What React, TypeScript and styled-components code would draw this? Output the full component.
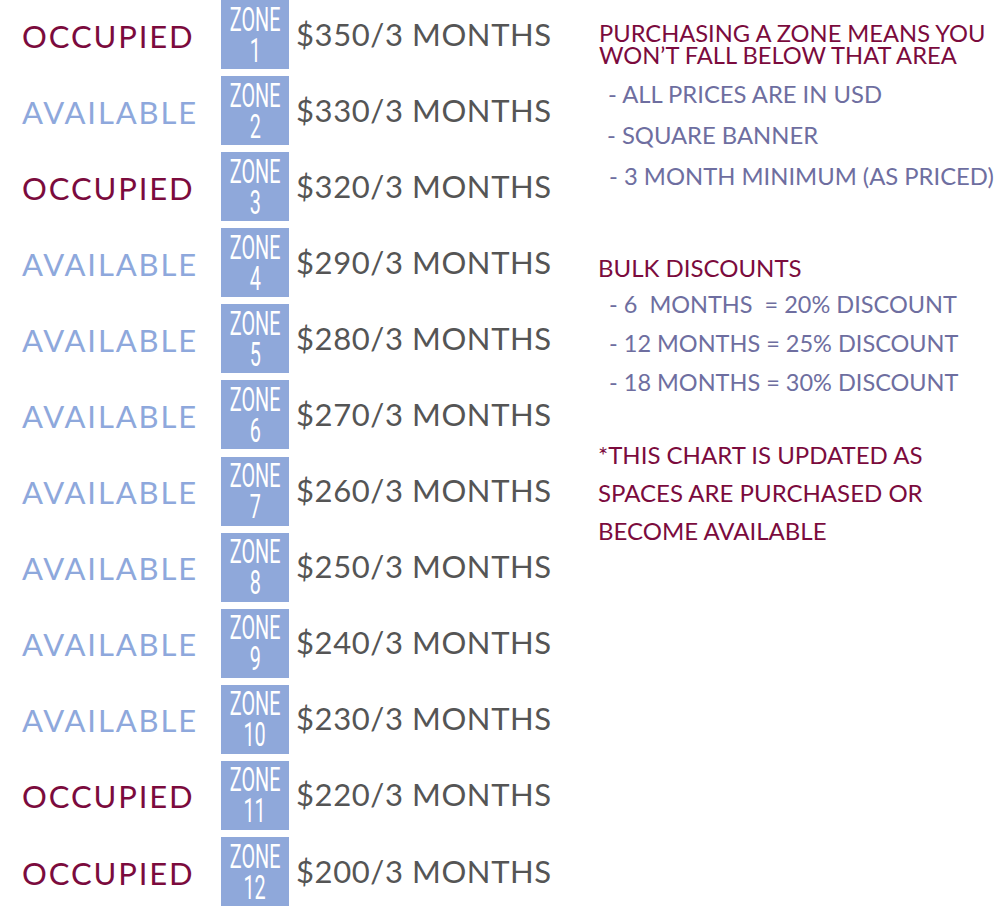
import React from "react";
import styled, { createGlobalStyle } from "styled-components";

const Global = createGlobalStyle`
  html, body { margin: 0; padding: 0; background: #ffffff; }
  body { font-family: Lato, "Open Sans", sans-serif; }
`;

const Page = styled.div`
  display: flex;
  align-items: flex-start;
  width: 1000px;
  height: 919px;
  overflow: hidden;
`;

const Chart = styled.div`
  display: flex;
  flex-direction: column;
  gap: 7.1px;
  padding-left: 22px;
  width: 598px;
  box-sizing: border-box;
`;

const Row = styled.div`
  display: flex;
  align-items: center;
  height: 69px;
`;

const Status = styled.div<{ $occupied: boolean }>`
  width: 199px;
  font-family: Lato, sans-serif;
  font-size: 31px;
  letter-spacing: 1.9px;
  color: ${(p) => (p.$occupied ? "#7b0b3d" : "#8ea8dc")};
  padding-top: 2px;
  white-space: nowrap;
`;

const ZoneBox = styled.div`
  width: 68px;
  height: 69px;
  background: #8fa8da;
  display: flex;
  flex-direction: column;
  align-items: center;
  justify-content: center;
  color: #ffffff;
  overflow: hidden;
`;

const ZoneLine = styled.span`
  display: block;
  font-family: Roboto, sans-serif;
  font-weight: 400;
  font-size: 33px;
  line-height: 31px;
  transform: scaleX(0.6);
  white-space: nowrap;
`;

const Price = styled.div`
  margin-left: 7px;
  padding-bottom: 2px;
  font-family: Lato, sans-serif;
  font-size: 31px;
  letter-spacing: 0.6px;
  color: #555555;
  white-space: nowrap;
`;

const Notes = styled.div`
  display: flex;
  flex-direction: column;
  padding-top: 22px;
  width: 402px;
`;

const Heading = styled.div`
  font-family: Lato, sans-serif;
  font-size: 23.7px;
  line-height: 22px;
  color: #7b0b3d;
  padding-left: 1px;
  white-space: nowrap;
`;

const Bullet = styled.div<{ $indent: number; $lh: number; $size: number }>`
  font-family: Lato, sans-serif;
  font-size: ${(p) => p.$size}px;
  line-height: ${(p) => p.$lh}px;
  color: #6e6ea0;
  padding-left: ${(p) => p.$indent}px;
  white-space: pre;
`;

const BulletGroup = styled.div<{ $top: number }>`
  margin-top: ${(p) => p.$top}px;
  display: flex;
  flex-direction: column;
`;

const SubHeading = styled.div<{ $top: number }>`
  margin-top: ${(p) => p.$top}px;
  font-family: Lato, sans-serif;
  font-size: 24px;
  line-height: 26px;
  color: #7b0b3d;
`;

const Footnote = styled.div<{ $top: number }>`
  margin-top: ${(p) => p.$top}px;
  font-family: Lato, sans-serif;
  font-size: 24px;
  line-height: 38px;
  color: #7b0b3d;
  white-space: nowrap;
`;

const zones = [
  { occupied: true, price: 350 },
  { occupied: false, price: 330 },
  { occupied: true, price: 320 },
  { occupied: false, price: 290 },
  { occupied: false, price: 280 },
  { occupied: false, price: 270 },
  { occupied: false, price: 260 },
  { occupied: false, price: 250 },
  { occupied: false, price: 240 },
  { occupied: false, price: 230 },
  { occupied: true, price: 220 },
  { occupied: true, price: 200 },
];

export default function App() {
  return (
    <Page>
      <Global />
      <Chart>
        {zones.map((z, i) => (
          <Row key={i}>
            <Status $occupied={z.occupied}>{z.occupied ? "OCCUPIED" : "AVAILABLE"}</Status>
            <ZoneBox>
              <ZoneLine>ZONE</ZoneLine>
              <ZoneLine>{i + 1}</ZoneLine>
            </ZoneBox>
            <Price>${z.price}/3 MONTHS</Price>
          </Row>
        ))}
      </Chart>
      <Notes>
        <Heading>
          PURCHASING A ZONE MEANS YOU
          <br />
          WON’T FALL BELOW THAT AREA
        </Heading>
        <BulletGroup $top={8}>
          <Bullet $indent={10} $lh={41} $size={23.8}>- ALL PRICES ARE IN USD</Bullet>
          <Bullet $indent={9} $lh={41} $size={23.8}>- SQUARE BANNER</Bullet>
          <Bullet $indent={11} $lh={41} $size={23.8}>- 3 MONTH MINIMUM (AS PRICED)</Bullet>
        </BulletGroup>
        <SubHeading $top={58}>BULK DISCOUNTS</SubHeading>
        <BulletGroup $top={4}>
          <Bullet $indent={11} $lh={39} $size={23.5}>- 6  MONTHS  = 20% DISCOUNT</Bullet>
          <Bullet $indent={11} $lh={39} $size={23.5}>- 12 MONTHS = 25% DISCOUNT</Bullet>
          <Bullet $indent={11} $lh={39} $size={23.5}>- 18 MONTHS = 30% DISCOUNT</Bullet>
        </BulletGroup>
        <Footnote $top={34}>
          *THIS CHART IS UPDATED AS
          <br />
          SPACES ARE PURCHASED OR
          <br />
          BECOME AVAILABLE
        </Footnote>
      </Notes>
    </Page>
  );
}
